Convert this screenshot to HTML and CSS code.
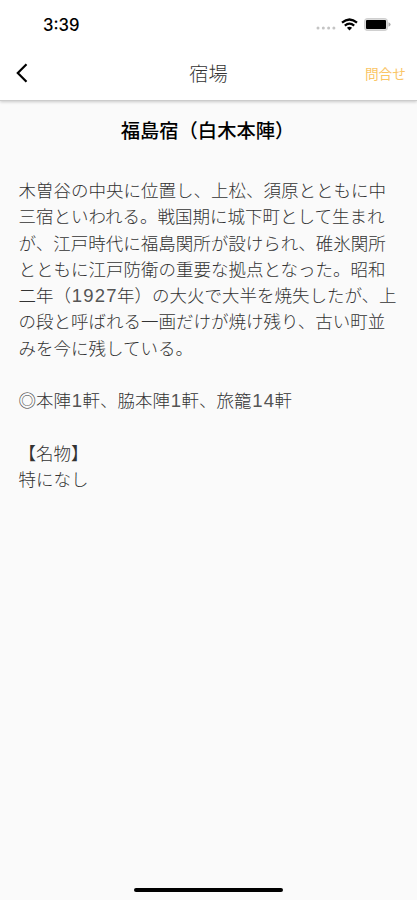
FILE: index.html
```html
<!DOCTYPE html>
<html lang="ja">
<head>
  <meta charset="utf-8">
  <title>宿場</title>
  <link rel="stylesheet" href="styles.css">
</head>
<body>
  <header class="header">
    <div class="status-bar">
      <span class="time">3:39</span>
      <div class="status-icons">
        <svg class="signal" width="20" height="4" viewBox="0 0 20 4" fill="#c4c4c4">
          <circle cx="2" cy="2" r="1.5"/><circle cx="7.3" cy="2" r="1.5"/><circle cx="12.6" cy="2" r="1.5"/><circle cx="17.9" cy="2" r="1.5"/>
        </svg>
        <svg class="wifi" width="17" height="13" viewBox="0 0 17 13" fill="none" stroke="#000" stroke-width="2.2">
          <path d="M1 4.7Q8.5-1.7 16 4.7"/>
          <path d="M3.8 7.7Q8.5 3.7 13.2 7.7"/>
          <path d="M8.5 12.5L5.9 9.8Q8.5 7.8 11.1 9.8Z" fill="#000" stroke="none"/>
        </svg>
        <svg class="battery" width="27" height="13" viewBox="0 0 27 13">
          <rect x=".6" y=".6" width="22.8" height="11.8" rx="2.5" fill="#ddd" stroke="#ccc"/>
          <rect x="2" y="2" width="20" height="9" rx="1" fill="#000"/>
          <path d="M24.5 4.2Q26.6 5 26.6 6.5T24.5 8.8Z" fill="#aaa"/>
        </svg>
      </div>
    </div>
    <nav class="nav">
      <a class="back" href="#" aria-label="戻る">
        <svg width="12" height="20" viewBox="0 0 12 20" fill="none" stroke="#000" stroke-width="2.2">
          <path d="M10.5 1.3L1.8 10L10.5 18.7"/>
        </svg>
      </a>
      <h1 class="nav-title">宿場</h1>
      <a class="contact" href="#">問合せ</a>
    </nav>
  </header>

  <main class="content">
    <h2 class="title">福島宿（白木本陣）</h2>
    <div class="description">
      <p>木曽谷の中央に位置し、上松、須原とともに中<br>三宿といわれる。戦国期に城下町として生まれ<br>が、江戸時代に福島関所が設けられ、碓氷関所<br>とともに江戸防衛の重要な拠点となった。昭和<br>二年（<span class="num">1927</span>年）の大火で大半を焼失したが、上<br>の段と呼ばれる一画だけが焼け残り、古い町並<br>みを今に残している。</p>
      <p>◎本陣<span class="num">1</span>軒、脇本陣<span class="num">1</span>軒、旅籠<span class="num">14</span>軒</p>
      <p>【名物】<br>特になし</p>
    </div>
  </main>

  <div class="home-indicator"></div>
</body>
</html>
```

FILE: styles.css
```css
body {
  margin: 0;
  height: 900px;
  display: flex;
  flex-direction: column;
  background: #fafafa;
  color: #000;
  font-family: 'Noto Sans CJK JP', sans-serif;
  overflow: hidden;
}

.header {
  height: 100px;
  background: #fff;
  border-bottom: 1px solid #ccc;
  box-shadow: 0 1px 3px rgba(0,0,0,0.2);
}

.status-bar {
  display: flex;
  justify-content: space-between;
  align-items: center;
  height: 48px;
  padding: 0 26px 0 43px;
}

.time {
  padding-top: 1px;
  font-family: Inter, sans-serif;
  font-size: 16.7px;
  font-weight: 500;
}

.status-icons {
  display: flex;
  align-items: center;
}

.signal {
  margin: 8px 5px 0 0;
}

.wifi {
  margin-right: 6px;
}

.nav {
  display: grid;
  grid-template-columns: 1fr auto 1fr;
  align-items: center;
  height: 50px;
  padding: 0 11px 0 16px;
}

.back {
  display: flex;
}

.nav-title {
  margin: 0;
  padding-right: 5px;
  color: #333;
  font-size: 19.2px;
  font-weight: 300;
  line-height: 28px;
}

.contact {
  justify-self: end;
  color: #fac566;
  font-size: 13.7px;
  font-weight: 400;
  text-decoration: none;
}

.content {
  flex: 1;
  padding: 0 18px;
}

.title {
  margin: 16px 2px 34px 0;
  font-size: 19.3px;
  font-weight: 500;
  line-height: 26px;
  text-align: center;
}

.description {
  margin-left: 0.5px;
  color: #333;
  font-size: 17.5px;
  font-weight: 300;
  line-height: 26.3px;
  white-space: nowrap;
}

.description p {
  margin: 0 0 26.3px;
}

.num {
  margin-left: 0.8px;
  margin-right: -0.8px;
  font-family: 'Liberation Sans', sans-serif;
  font-size: 18.5px;
  line-height: 1;
  letter-spacing: 1.2px;
  color: #555;
}

.home-indicator {
  width: 149px;
  height: 4px;
  margin: 0 auto 8px;
  border-radius: 2px;
  background: #000;
}
```
